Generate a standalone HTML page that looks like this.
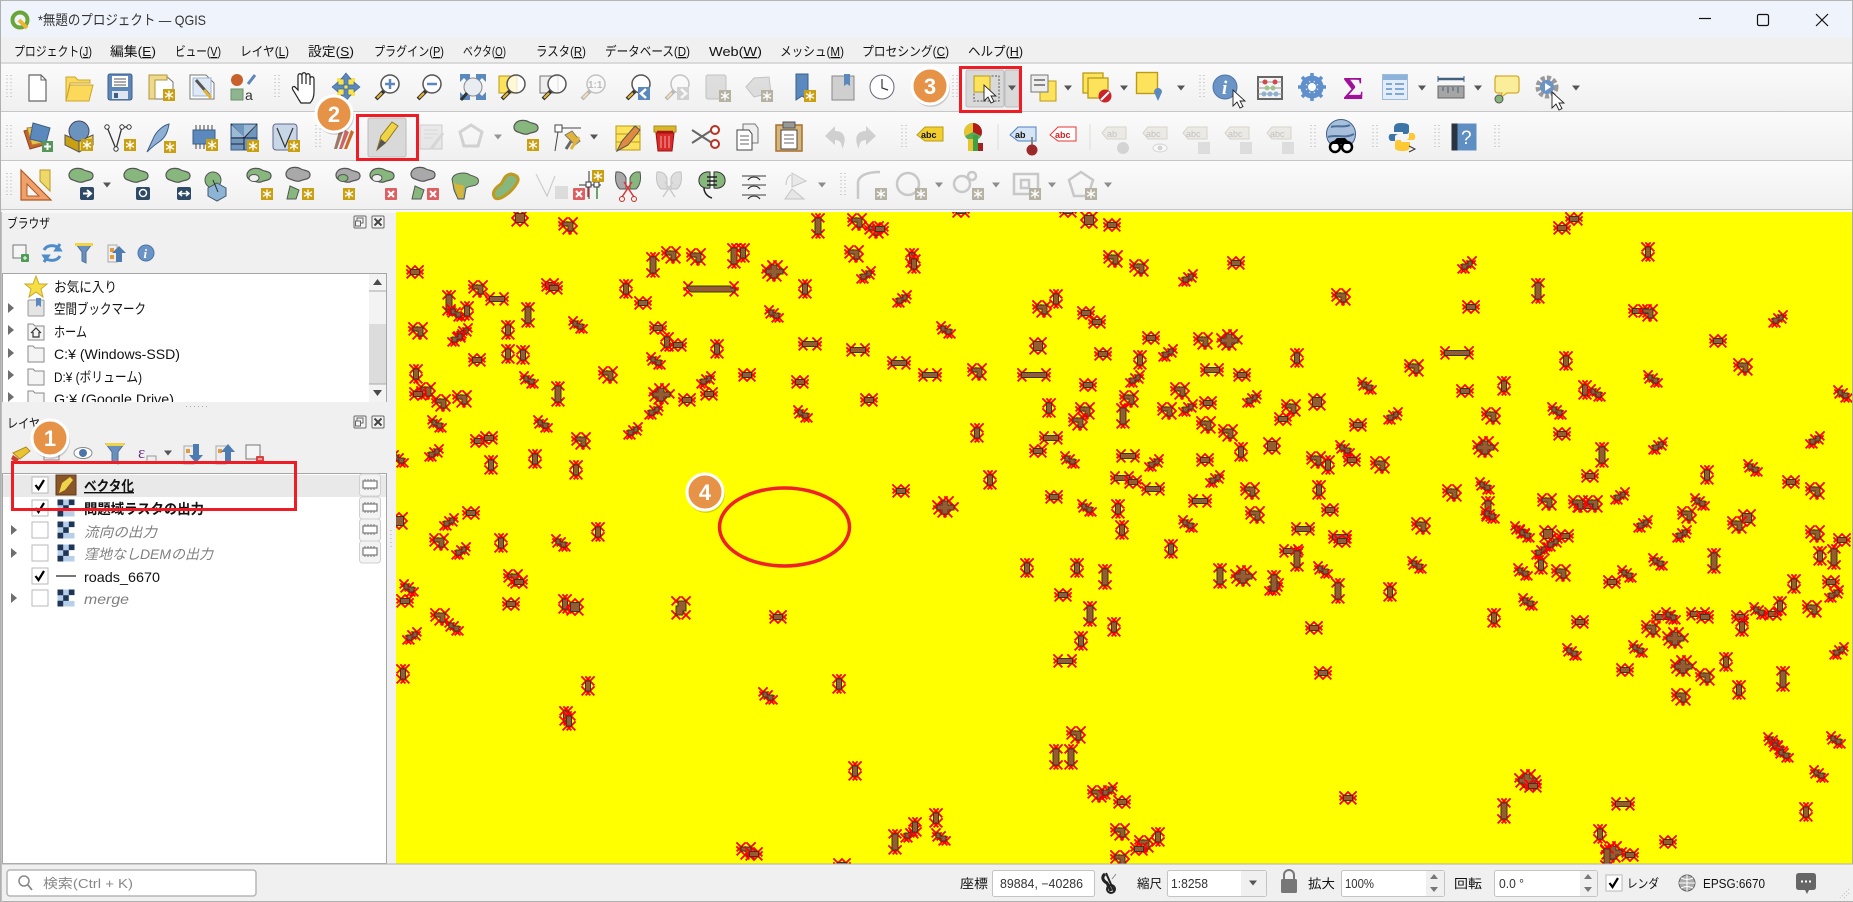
<!DOCTYPE html>
<html lang="ja"><head><meta charset="utf-8"><title>*無題のプロジェクト — QGIS</title>
<style>
html,body{margin:0;padding:0;width:1853px;height:902px;overflow:hidden;background:#f0f0f0}
svg{display:block}
text{font-family:"Liberation Sans","Noto Sans CJK JP",sans-serif;fill:#111}
.m text{font-size:13px}
.g{opacity:.32}
.red{stroke:#f00;stroke-width:1.5;fill:none;shape-rendering:crispEdges}
.br{fill:#945c30;stroke:#3a342e;stroke-width:1}
</style></head><body>
<svg width="1853" height="902" viewBox="0 0 1853 902" xmlns="http://www.w3.org/2000/svg">
<defs>
<linearGradient id="tb" x1="0" y1="0" x2="0" y2="1"><stop offset="0" stop-color="#fbfbfb"/><stop offset="1" stop-color="#f0f0f0"/></linearGradient>
<!-- map markers -->
<path id="x" class="red" d="M-4.500-4.500L4.500 4.500M4.500-4.500L-4.500 4.500"/>
<g id="h"><use href="#x" x="-4" y="-2"/><use href="#x" x="4" y="-2"/><use href="#x" x="-4" y="2"/><use href="#x" x="4" y="2"/><rect class="br" x="-4.500" y="-2.500" width="9" height="5"/></g>
<g id="w"><use href="#x" x="-7" y="-2"/><use href="#x" x="7" y="-2"/><use href="#x" x="-7" y="2"/><use href="#x" x="7" y="2"/><rect class="br" x="-7.500" y="-2.500" width="15" height="5"/></g>
<g id="W"><use href="#x" x="-12" y="-2"/><use href="#x" x="12" y="-2"/><use href="#x" x="-12" y="2"/><use href="#x" x="12" y="2"/><rect class="br" x="-12.500" y="-2.500" width="25" height="5"/></g>
<g id="L"><use href="#x" x="-23" y="-3"/><use href="#x" x="23" y="-3"/><use href="#x" x="-23" y="3"/><use href="#x" x="23" y="3"/><path class="br" d="M-24-3H20V-1H24V3H-20L-24-1Z"/></g>
<g id="v"><use href="#x" x="-2" y="-5"/><use href="#x" x="2" y="-5"/><use href="#x" x="-2" y="5"/><use href="#x" x="2" y="5"/><rect class="br" x="-2.500" y="-5" width="5" height="10"/></g>
<g id="t"><use href="#x" x="-2" y="-8"/><use href="#x" x="2" y="-8"/><use href="#x" x="-2" y="8"/><use href="#x" x="2" y="8"/><rect class="br" x="-3" y="-8" width="6" height="16"/></g>
<g id="s"><use href="#x" x="-4" y="-4"/><use href="#x" x="4" y="-4"/><use href="#x" x="-4" y="4"/><use href="#x" x="4" y="4"/><rect class="br" x="-4.500" y="-4.500" width="9" height="9"/></g>
<g id="S"><use href="#x" x="-5" y="-7"/><use href="#x" x="5" y="-7"/><use href="#x" x="-5" y="7"/><use href="#x" x="5" y="7"/><path class="br" d="M-3-7H5V3L2 3V7H-5V-2H-3Z"/></g>
<g id="l"><use href="#x" x="-5" y="-4"/><use href="#x" x="5" y="-4"/><use href="#x" x="5" y="4"/><use href="#x" x="-1" y="4"/><use href="#x" x="-5" y="0"/><path class="br" d="M-5-4H5V5H0V0H-5Z"/></g>
<g id="z"><use href="#x" x="-5" y="-4"/><use href="#x" x="0" y="-1"/><use href="#x" x="5" y="4"/><use href="#x" x="-4" y="0"/><use href="#x" x="2" y="4"/><path class="br" d="M-5-4H-1V-1H5V4H0V1H-5Z"/></g>
<g id="n"><use href="#x" x="5" y="-4"/><use href="#x" x="0" y="-1"/><use href="#x" x="-5" y="4"/><use href="#x" x="4" y="0"/><use href="#x" x="-2" y="4"/><path class="br" d="M5-4H1V-1H-5V4H0V1H5Z"/></g>
<g id="b"><use href="#x" x="-8" y="-2"/><use href="#x" x="-2" y="-6"/><use href="#x" x="4" y="-6"/><use href="#x" x="9" y="0"/><use href="#x" x="3" y="6"/><use href="#x" x="-3" y="6"/><use href="#x" x="-7" y="3"/><path class="br" d="M-8-2H-3V-6H3V-2H9V3H3V7H-3V3H-8Z"/></g>
<!-- icon parts -->
<g id="star"><rect x="-6" y="-6" width="12" height="12" fill="#c9a012"/><path d="M0-4.500V4.500M-4-2.300L4 2.300M4-2.300L-4 2.300" stroke="#fff" stroke-width="1.300"/></g>
<g id="gstar"><rect x="-6" y="-6" width="12" height="12" fill="#b5b1a3"/><path d="M0-4.500V4.500M-4-2.300L4 2.300M4-2.300L-4 2.300" stroke="#fff" stroke-width="1.300"/></g>
<g id="rx"><rect x="-6" y="-6" width="12" height="12" rx="1" fill="#dd5f62"/><path d="M-3-3L3 3M3-3L-3 3" stroke="#fff" stroke-width="2"/></g>
<path id="gp" d="M-11-7C-8-12 0-11 3-9C7-7 12-8 12-3C12 2 5 1 2 3C-2 4-5 2-8 1C-12 0-13-4-11-7Z" fill="#87b77d" stroke="#555" stroke-width="1.200"/>
<path id="gpg" d="M-11-7C-8-12 0-11 3-9C7-7 12-8 12-3C12 2 5 1 2 3C-2 4-5 2-8 1C-12 0-13-4-11-7Z" fill="#a9a9a9" stroke="#555" stroke-width="1.200"/>
<g id="mg"><path d="M-3 4L-11 12" stroke="#333" stroke-width="4"/><path d="M-5 6L-10 11" stroke="#e8b52c" stroke-width="2"/><circle cx="3" cy="-3" r="9" fill="#fff" fill-opacity=".75" stroke="#555" stroke-width="1.500"/></g>
<path id="dr" d="M-4-2.500H4L0 2.500Z" fill="#555"/>
<g id="grip" fill="#b0b0b0"><path d="M-2-12v24M2-12v24" stroke="#aaa" stroke-width="1" stroke-dasharray="1 2.500" fill="none"/></g>
<g id="sel"><rect x="-10" y="-10" width="20" height="20" fill="#fde25c" stroke="#b99b17" stroke-width="1.300"/></g>
<path id="cur" d="M0 0V16L4 12L7 18L10 16.500L7 11H12Z" fill="#fff" stroke="#222" stroke-width=".9"/>
<g id="tag"><path d="M-12-1L-7-7H12V5H-7Z" fill="#e3e0d6" stroke="#bbb8aa"/></g>
<g id="chk"><rect x="-8" y="-8" width="16" height="16" fill="#fff" stroke="#b9b9b9"/></g>
<path id="tick" d="M-4.500 0L-1.500 4L4-5" fill="none" stroke="#000" stroke-width="2.200"/>
<g id="tri"><path d="M-3-5L3 0L-3 5Z" fill="#6e6e6e"/></g>
<path id="fold" d="M-8-8H-3L-1-6H8V8H-8Z" fill="#f4f4f4" stroke="#8a8a8a"/>
<g id="chip"><rect x="-10.500" y="-11" width="21" height="22" rx="3" fill="#f3f3f3" stroke="#d0d0d0"/><rect x="-7" y="-4" width="14" height="7" fill="#fff" stroke="#777" stroke-width="1.200"/><path d="M-5-6v2M-2-6v2M1-6v2M4-6v2M-5 3v2M-2 3v2M1 3v2M4 3v2" stroke="#777"/></g>
<g id="rast"><rect x="-8.500" y="-8.500" width="17" height="17" fill="#b7cfe8"/><path d="M-8.500-8.500h5.700v5.700h-5.700zM2.800-8.500h5.700v5.700h-5.700zM-2.800-2.800h5.700v5.700h-5.700zM-8.500 2.800h5.700v5.700h-5.700z" fill="#1d3556"/><path d="M2.800-2.800h5.700v5.700h-5.700z" fill="#fff"/></g>
<g id="spin"><path d="M-4-4L0-9L4-4ZM-4 4L0 9L4 4Z" fill="#777"/></g>
<g id="fl"><rect x="-6" y="-6" width="12" height="12" rx="1" fill="#f4f4f4" stroke="#666"/><rect x="-3" y="-4" width="6" height="5" fill="none" stroke="#666"/><rect x="-4.500" y="-1" width="5" height="5" fill="#f4f4f4" stroke="#666"/></g>
<g id="cl"><rect x="-6" y="-6" width="12" height="12" rx="1" fill="#f4f4f4" stroke="#666"/><path d="M-3.500-3.500L3.500 3.500M3.500-3.500L-3.500 3.500" stroke="#444" stroke-width="2"/></g>
<g id="bd"><circle cx="1" cy="2" r="19" fill="#000" fill-opacity=".16"/><circle r="18" fill="#e69247" stroke="#fff" stroke-width="3"/></g>
</defs>

<!-- base -->
<rect width="1853" height="902" fill="#f0f0f0"/>
<rect width="1853" height="37" fill="#eff3fb"/>
<rect y="0" width="1853" height="1" fill="#b5b5b5"/>
<rect y="62" width="1853" height="2" fill="#dadada"/>
<rect y="64" width="1853" height="47" fill="url(#tb)"/><rect y="111" width="1853" height="1" fill="#c6c6c6"/>
<rect y="112" width="1853" height="48" fill="url(#tb)"/><rect y="160" width="1853" height="1" fill="#c6c6c6"/>
<rect y="161" width="1853" height="48" fill="url(#tb)"/><rect y="209" width="1853" height="1" fill="#c6c6c6"/>
<rect y="210" width="1853" height="3" fill="#f8f8f8"/>

<!-- title -->
<circle cx="20" cy="20" r="7.500" fill="none" stroke="#6aa53a" stroke-width="4"/><path d="M19 20L27 28" stroke="#eeb72c" stroke-width="4"/>
<text x="38" y="25" font-size="14" textLength="168" lengthAdjust="spacingAndGlyphs" style="fill:#333">*無題のプロジェクト — QGIS</text>
<path d="M1699 18.500H1711" stroke="#111" stroke-width="1.200"/><rect x="1757.500" y="14.500" width="11" height="11" rx="1.500" fill="none" stroke="#111" stroke-width="1.200"/><path d="M1816 14L1828 26M1828 14L1816 26" stroke="#111" stroke-width="1.200"/>

<!-- menu -->
<g class="m">
<text x="14" y="56" textLength="78" lengthAdjust="spacingAndGlyphs">プロジェクト(<tspan text-decoration="underline">J</tspan>)</text>
<text x="110" y="56" textLength="46" lengthAdjust="spacingAndGlyphs">編集(<tspan text-decoration="underline">E</tspan>)</text>
<text x="175" y="56" textLength="46" lengthAdjust="spacingAndGlyphs">ビュー(<tspan text-decoration="underline">V</tspan>)</text>
<text x="240" y="56" textLength="49" lengthAdjust="spacingAndGlyphs">レイヤ(<tspan text-decoration="underline">L</tspan>)</text>
<text x="308" y="56" textLength="46" lengthAdjust="spacingAndGlyphs">設定(<tspan text-decoration="underline">S</tspan>)</text>
<text x="374" y="56" textLength="70" lengthAdjust="spacingAndGlyphs">プラグイン(<tspan text-decoration="underline">P</tspan>)</text>
<text x="463" y="56" textLength="43" lengthAdjust="spacingAndGlyphs">ベクタ(<tspan text-decoration="underline">O</tspan>)</text>
<text x="536" y="56" textLength="50" lengthAdjust="spacingAndGlyphs">ラスタ(<tspan text-decoration="underline">R</tspan>)</text>
<text x="605" y="56" textLength="85" lengthAdjust="spacingAndGlyphs">データベース(<tspan text-decoration="underline">D</tspan>)</text>
<text x="709" y="56" textLength="53" lengthAdjust="spacingAndGlyphs">Web(<tspan text-decoration="underline">W</tspan>)</text>
<text x="780" y="56" textLength="64" lengthAdjust="spacingAndGlyphs">メッシュ(<tspan text-decoration="underline">M</tspan>)</text>
<text x="862" y="56" textLength="87" lengthAdjust="spacingAndGlyphs">プロセシング(<tspan text-decoration="underline">C</tspan>)</text>
<text x="968" y="56" textLength="55" lengthAdjust="spacingAndGlyphs">ヘルプ(<tspan text-decoration="underline">H</tspan>)</text>
</g>

<!-- grips -->
<g><use href="#grip" x="9" y="87"/><use href="#grip" x="277" y="87"/><use href="#grip" x="955" y="87"/><use href="#grip" x="1202" y="87"/>
<use href="#grip" x="9" y="137"/><use href="#grip" x="318" y="137"/><use href="#grip" x="904" y="137"/><use href="#grip" x="1313" y="137"/><use href="#grip" x="1375" y="137"/><use href="#grip" x="1437" y="137"/><use href="#grip" x="1497" y="137"/>
<use href="#grip" x="9" y="185"/><use href="#grip" x="843" y="185"/></g>

<!-- ROW 1 -->
<path d="M29 75H41L46 80V101H29Z" fill="#fff" stroke="#666" stroke-width="1.200"/><path d="M41 75V80H46" fill="none" stroke="#666"/>
<path d="M66 82V77H75L78 80H90V83H70L66 101ZM66 101L70 85H93L89 101Z" fill="#fdd95b" stroke="#c9a52d"/>
<g transform="translate(120 87)"><rect x="-12" y="-13" width="24" height="26" rx="2" fill="#5d87b8" stroke="#3e5f85"/><rect x="-8" y="-11" width="16" height="11" fill="#fff"/><path d="M-6-8H6M-6-5H6M-6-2H6" stroke="#555"/><rect x="-8" y="4" width="16" height="8" fill="#dfe6ef"/><rect x="-6" y="6" width="4" height="5" fill="#3e5f85"/></g>
<g transform="translate(161 87)"><path d="M-12-12H4L12-5V12H-12Z" fill="#fff" stroke="#777"/><path d="M-12-12H6V-7H-6V12H-12Z" fill="#efd98a" stroke="#b09540"/><use href="#star" x="8" y="8"/></g>
<g transform="translate(202 87)"><path d="M-12-12H4L12-4V12H-12Z" fill="#fff" stroke="#777"/><rect x="-9" y="-9" width="18" height="18" fill="#dfe8f5" stroke="#9cb2cf"/><path d="M-6-7L7 8" stroke="#555" stroke-width="3"/><path d="M2 3L9 11" stroke="#e0b339" stroke-width="3"/></g>
<g transform="translate(243 87)"><circle cx="-6" cy="-7" r="6" fill="#c8602c"/><path d="M5-3L12-12" stroke="#5d87b8" stroke-width="3"/><rect x="-12" y="2" width="12" height="11" fill="#8fb58f" stroke="#6b8f6b"/><text x="2" y="13" font-size="14" style="fill:#333">a</text></g>
<path d="M299 100L293 90C291 87 294 85 296 88L298 90V76C298 73 302 73 302 76V84V75C302 72 306 72 306 75V84V76C306 73 310 73 310 76V85V79C310 76 314 76 314 79V92C314 97 312 101 310 103H301Z" fill="#fff" stroke="#222" stroke-width="1.200"/>
<g transform="translate(346 87)"><rect x="-9" y="-9" width="18" height="18" fill="#fbe34d"/><path d="M0-14L-5-8H-2V8H-5L0 14L5 8H2V-8H5ZM-14 0L-8-5V-2H8V-5L14 0L8 5V2H-8V5Z" fill="#5b89bd" stroke="#3e6a9c" stroke-width=".7"/></g>
<g transform="translate(387 87)"><use href="#mg"/><path d="M3-8V2M-2-3H8" stroke="#5b89bd" stroke-width="2.500"/></g>
<g transform="translate(429 87)"><use href="#mg"/><path d="M-2-3H8" stroke="#5b89bd" stroke-width="2.500"/></g>
<g transform="translate(473 87)"><circle r="9" fill="#e9edf2" stroke="#888"/><path d="M-13-13H-3V-9L-6-6L-9-9L-13-5ZM13-13H3V-9L6-6L9-9L13-5ZM-13 13H-3V9L-6 6L-9 9L-13 5ZM13 13H3V9L6 6L9 9L13 5Z" fill="#5b89bd"/><path d="M-6 6L-12 13" stroke="#333" stroke-width="3"/></g>
<g transform="translate(511 87)"><rect x="-12" y="-11" width="18" height="17" fill="#fde25c" stroke="#b99b17"/><use href="#mg" x="2"/></g>
<g transform="translate(552 87)"><rect x="-12" y="-11" width="18" height="17" fill="#eee" stroke="#777"/><use href="#mg" x="2"/></g>
<g class="g" transform="translate(593 87)"><use href="#mg"/><text x="-5" y="1" font-size="10" font-weight="bold" style="fill:#444">1:1</text></g>
<g transform="translate(638 87)"><use href="#mg"/><rect x="0" y="0" width="12" height="13" fill="#5b89bd"/><path d="M8 2L3 6.500L8 11" fill="none" stroke="#fff" stroke-width="2.500"/></g>
<g class="g" transform="translate(677 87)"><use href="#mg"/><rect x="0" y="0" width="12" height="13" fill="#888"/><path d="M4 2L9 6.500L4 11" fill="none" stroke="#fff" stroke-width="2.500"/></g>
<g class="g" transform="translate(717 87)"><rect x="-11" y="-12" width="20" height="24" rx="2" fill="#aaa" stroke="#555"/></g>
<use href="#gstar" x="725" y="96"/>
<g class="g" transform="translate(759 87)"><path d="M-13 0L-5-9L10-10L12 6L-5 10Z" fill="#aaa" stroke="#555"/></g>
<use href="#gstar" x="767" y="96"/>
<path d="M796 74H808V100L802 96L796 100Z" fill="#5b89bd" stroke="#3e5f85"/><use href="#star" x="810" y="96" />
<path d="M832 76H854V100H832Z" fill="#cfcfcf" stroke="#888"/><path d="M844 74H850V86L847 84L844 86Z" fill="#5b89bd"/>
<circle cx="882" cy="87" r="12" fill="#fff" stroke="#667"/><path d="M882 79V88L888 90" fill="none" stroke="#333" stroke-width="1.200"/>
<!-- select -->
<rect x="966" y="70" width="38" height="37" rx="2" fill="#d9d9d9" stroke="#bbb"/><rect x="1005" y="70" width="14" height="37" rx="2" fill="#d9d9d9" stroke="#bbb"/>
<rect x="974" y="76" width="25" height="25" fill="none" stroke="#555" stroke-dasharray="2 1.500"/><rect x="974" y="76" width="16" height="16" fill="#fde25c" stroke="#b99b17"/><use href="#cur" x="984" y="85"/><use href="#dr" x="1012" y="88"/>
<g transform="translate(1042 87)"><rect x="-2" y="-6" width="16" height="20" fill="#fde25c" stroke="#b99b17"/><rect x="-11" y="-12" width="17" height="17" fill="#eee" stroke="#777"/><path d="M-8-7H3M-8-2H3" stroke="#888" stroke-width="2"/></g><use href="#dr" x="1068" y="88"/>
<g transform="translate(1096 87)"><use href="#sel" x="-3" y="-4"/><use href="#sel" x="2" y="1"/><circle cx="9" cy="9" r="6.500" fill="#c9232b"/><path d="M5 13L13 5" stroke="#fff" stroke-width="2"/></g><use href="#dr" x="1124" y="88"/>
<g transform="translate(1150 87)"><use href="#sel" transform="translate(-3 -4) scale(1.050)"/><path d="M8 14L4 5A4 4 0 1 1 12 5Z" fill="#5b89bd"/></g><use href="#dr" x="1181" y="88"/>
<g transform="translate(1225 87)"><circle r="12" fill="#6a93c6" stroke="#4d75a8"/><text x="-3" y="7" font-size="19" font-weight="bold" font-style="italic" style="fill:#fff;font-family:'Liberation Serif',serif">i</text></g><use href="#cur" x="1233" y="90"/>
<g transform="translate(1270 87)"><rect x="-12" y="-10" width="24" height="22" fill="none" stroke="#666" stroke-width="2"/><path d="M-12-5H12M-12 1H12M-12 7H12" stroke="#999"/><circle cx="-5" cy="-5" r="2.500" fill="#d3474a"/><circle cx="5" cy="-5" r="2.500" fill="#d3474a"/><circle cx="-3" cy="1" r="2.500" fill="#9fc48f"/><circle cx="3" cy="1" r="2.500" fill="#9fc48f"/><circle cx="-6" cy="7" r="2.500" fill="#8eb0d2"/><circle cx="0" cy="7" r="2.500" fill="#8eb0d2"/><circle cx="6" cy="7" r="2.500" fill="#8eb0d2"/></g>
<g transform="translate(1312 87)"><circle r="9" fill="none" stroke="#6090cc" stroke-width="5"/><path d="M0-14V14M-14 0H14M-10-10L10 10M10-10L-10 10" stroke="#6090cc" stroke-width="3.500"/><circle r="4" fill="#fff"/></g>
<text x="1343" y="99" font-size="32" font-weight="bold" style="fill:#a0109a;font-family:'Liberation Serif',serif">Σ</text>
<g transform="translate(1395 87)"><rect x="-12.500" y="-12.500" width="25" height="25" fill="#e4edf7" stroke="#9dbbdc"/><rect x="-12" y="-12" width="24" height="5" fill="#8db3da"/><path d="M-9-3H-3M0-3H9M-9 2H-3M0 2H9M-9 7H-3M0 7H9" stroke="#7fa9d5" stroke-width="2"/></g><use href="#dr" x="1422" y="88"/>
<g transform="translate(1451 87)"><rect x="-13" y="-1" width="26" height="12" fill="#a5a5a5" stroke="#666"/><path d="M-13-8H13" stroke="#44607f" stroke-width="2.500"/><path d="M-13-11V-5M13-11V-5M-8 0v4M-3 0v6M2 0v4M7 0v6" stroke="#44607f"/></g><use href="#dr" x="1478" y="88"/>
<g transform="translate(1507 87)"><path d="M-12-11H9Q12-11 12-8V3Q12 6 9 6H0L-7 11L-5 6H-9Q-12 6-12 3V-8Q-12-11-9-11Z" fill="#fbee9a" stroke="#d4ad2e" stroke-width="1.300"/><circle cx="-8" cy="12" r="4" fill="#86b47c" stroke="#555"/></g>
<g transform="translate(1547 87)"><circle r="9" fill="none" stroke="#999" stroke-width="5" stroke-dasharray="4 2"/><circle r="7" fill="#6a93c6"/><path d="M-2-4L4 0L-2 4Z" fill="#fff"/></g><use href="#cur" x="1552" y="92" /><use href="#dr" x="1576" y="88"/>

<!-- ROW 2 -->
<g transform="translate(38 137)"><path d="M-14-6L0-10L6 8L-8 12Z" fill="#c9602c" stroke="#8d4720"/><path d="M-11-9L3-11L8 5L-6 8Z" fill="#e9c24a" stroke="#a98a2b"/><path d="M-5-14L12-9L8 6L-8 2Z" fill="#5b89bd" stroke="#3e5f85"/><rect x="4" y="4" width="11" height="11" fill="#57965a"/><path d="M9.500 6V13M6 9.500H13" stroke="#fff" stroke-width="2"/></g>
<g transform="translate(79 137)"><path d="M-14-2L0 4V15L-14 8Z" fill="#c9a012" stroke="#555"/><path d="M14-2L0 4V15L14 8Z" fill="#f0d040" stroke="#555"/><circle cy="-6" r="10" fill="#6c93bd" stroke="#446"/><use href="#star" x="8" y="8"/></g>
<g transform="translate(119 137)"><path d="M-12-10L-3 12L3-10L10-10" fill="none" stroke="#333" stroke-width="1.300"/><circle cx="-12" cy="-10" r="2.200" fill="#fff" stroke="#333"/><circle cx="3" cy="-10" r="2.200" fill="#fff" stroke="#333"/><circle cx="10" cy="-10" r="2.200" fill="#fff" stroke="#333"/><circle cx="-3" cy="12" r="2.200" fill="#fff" stroke="#333"/><use href="#star" x="11" y="8"/></g>
<g transform="translate(160 137)"><path d="M-13 15L-7 2C-4-6 4-12 9-13C8-6 6 0-1 5C-4 7-7 9-13 15Z" fill="#8fb0d5" stroke="#3e5f85"/><use href="#star" x="10" y="10"/></g>
<g transform="translate(204 137)"><rect x="-11" y="-7" width="22" height="14" fill="#5b89bd" stroke="#3e5f85"/><path d="M-8-12V-7M-4-12V-7M0-12V-7M4-12V-7M8-12V-7M-8 7V12M-4 7V12M0 7V12" stroke="#444"/><use href="#star" x="8" y="8"/></g>
<g transform="translate(244 137)"><rect x="-13" y="-13" width="26" height="26" fill="#6f96bd" stroke="#3e5f85"/><path d="M-13-13L0 1L13-13M-13 1H13M0 1V13M-13 7H0" stroke="#223" fill="none"/><path d="M-12-12L0 0H-12ZM0-12H12L0 0Z" fill="#9dbad4"/><use href="#star" x="9" y="9"/></g>
<g transform="translate(285 137)"><rect x="-12" y="-13" width="24" height="26" rx="3" fill="#c8d7e7" stroke="#668"/><path d="M-8-9L0 10L8-9" fill="none" stroke="#333" stroke-width="1.200"/><use href="#star" x="9" y="9"/></g>
<g transform="translate(342 137)"><path d="M-8 12L-3-6L1-5L-5 12Z" fill="#9a7a66"/><path d="M-3 12L3-7L7-5L0 12Z" fill="#c66"/><path d="M2 12L9-7L12-5L5 12Z" fill="#ca6a2a"/></g>
<rect x="368" y="118" width="38" height="39" rx="2" fill="#d9d9d9" stroke="#bbb"/>
<path d="M377 150L381 136L392 122L398 126L387 141Z" fill="#f0d448" stroke="#94791c"/><path d="M377 150L381 139L386 143Z" fill="#555"/>
<g class="g"><g transform="translate(431 137)"><rect x="-11" y="-12" width="22" height="24" fill="#ccc" stroke="#777"/><path d="M-7-7H7M-7-3H7M-7 1H2" stroke="#999"/><path d="M0 12L12-4" stroke="#999" stroke-width="3"/></g><path d="M471 125L482 132L478 146H464L460 132Z" fill="none" stroke="#888" stroke-width="3"/></g>
<g opacity=".6"><use href="#dr" x="498" y="137"/></g>
<use href="#gp" x="526" y="131"/><use href="#star" x="533" y="145"/>
<g transform="translate(568 137)"><rect x="-13" y="-12" width="7" height="7" fill="#fff" stroke="#444"/><path d="M-10-5L-13 14M-6-9H13" stroke="#444"/><path d="M-2 12L7-2" stroke="#666" stroke-width="3"/><path d="M-3-2L4-6L12 4L7 8Z" fill="#e0b339" stroke="#777"/><path d="M3 12L11 0" stroke="#e0b339" stroke-width="3"/></g><use href="#dr" x="594" y="137"/>
<g transform="translate(628 137)"><rect x="-12" y="-11" width="24" height="24" fill="#fde25c" stroke="#b99b17"/><path d="M-12-3H12M-12 5H12" stroke="#b99b17"/><path d="M-11 14L-6 4L7-11L12-7L0 8Z" fill="#e08a40" stroke="#555"/></g>
<g transform="translate(665 137)"><rect x="-11" y="-11" width="22" height="6" fill="#d8b828" stroke="#a98a20"/><path d="M-9-4H9L7 14H-7Z" fill="#d92a2a" stroke="#911"/><path d="M-4-1V11M0-1V11M4-1V11" stroke="#eaa"/><path d="M-8-5H8" stroke="#a11" stroke-width="2.500"/></g>
<g transform="translate(705 137)"><path d="M-13-7L7 6M-13 6L7-7" stroke="#666" stroke-width="2"/><circle cx="10" cy="-7" r="4" fill="#fff" stroke="#b32"  stroke-width="2"/><circle cx="10" cy="7" r="4" fill="#fff" stroke="#b32" stroke-width="2"/></g>
<g transform="translate(747 137)"><path d="M-4-13H8L11-9V6H-4Z" fill="#eee" stroke="#777"/><path d="M-10-7H2L5-3V13H-10Z" fill="#fff" stroke="#444"/><path d="M-7-1H2M-7 3H2M-7 7H2" stroke="#666"/></g>
<g transform="translate(789 137)"><rect x="-13" y="-12" width="26" height="26" fill="#d8b57a" stroke="#a6702c" stroke-width="1.500"/><rect x="-6" y="-15" width="12" height="6" fill="#999" stroke="#555"/><path d="M-8-7H8V12H-8Z" fill="#fff" stroke="#444"/><path d="M-5-2H5M-5 2H5M-5 6H5" stroke="#666"/></g>
<g opacity=".4" fill="#999"><path d="M825 137L835 127V132C847 132 846 143 842 150C842 144 840 141 835 141V146Z" transform="translate(0 -1)"/><path d="M876 137L866 127V132C854 132 855 143 859 150C859 144 861 141 866 141V146Z" transform="translate(0 -1)"/></g>
<g style="font-size:10px"><path d="M917 135L925 127H943V141H925Z" fill="#f3cf2e" stroke="#b99b17"/><text x="921" y="138" font-size="9" font-weight="bold">abc</text>
<g transform="translate(973 137)"><circle cy="-5" r="9" fill="#5aaa55"/><path d="M0-14A9 9 0 0 1 8-1L0-5Z" fill="#b31a1a"/><path d="M0-14A9 9 0 0 0-8-1L0-5Z" fill="#e8c530"/><rect x="-5" y="2" width="5" height="12" fill="#e8c530"/><rect x="0" y="-2" width="5" height="16" fill="#3fa044"/><rect x="5" y="6" width="5" height="8" fill="#a52020"/></g>
<path d="M998 124V150" stroke="#ddd"/>
<path d="M1010 135L1018 127H1036V141H1018Z" fill="#d5e4f5" stroke="#4d80c4"/><text x="1015" y="138" font-size="9" font-weight="bold">ab</text><path d="M1032 137V148" stroke="#888" stroke-width="2"/><circle cx="1032" cy="150" r="5.500" fill="#9c2a2a"/>
<path d="M1050 135L1058 127H1076V141H1058Z" fill="#fff" stroke="#e33"/><text x="1055" y="138" font-size="9" font-weight="bold" style="fill:#c22">abc</text>
<path d="M1090 124V150" stroke="#ddd"/></g>
<g opacity=".55"><g font-size="9"><use href="#tag" x="1114" y="134"/><text x="1107" y="137" style="fill:#999" font-size="9">ab</text><circle cx="1123" cy="148" r="6" fill="#bbb"/><use href="#tag" x="1155" y="134"/><text x="1146" y="137" style="fill:#999" font-size="9">abc</text><ellipse cx="1160" cy="148" rx="7" ry="4" fill="#fff" stroke="#bbb"/><circle cx="1160" cy="148" r="2.500" fill="#bbb"/><use href="#tag" x="1195" y="134"/><text x="1186" y="137" style="fill:#999" font-size="9">abc</text><rect x="1198" y="142" width="12" height="12" fill="#ccc"/><use href="#tag" x="1237" y="134"/><text x="1228" y="137" style="fill:#999" font-size="9">abc</text><rect x="1240" y="142" width="12" height="12" fill="#ccc"/><use href="#tag" x="1279" y="134"/><text x="1270" y="137" style="fill:#999" font-size="9">abc</text><rect x="1282" y="142" width="12" height="12" fill="#ccc"/></g></g>
<g transform="translate(1341 137)"><circle cy="-3" r="14.500" fill="#a7bfdb" stroke="#3e5f85"/><path d="M-10-10C-3-12 4-9 9-12M-13 0C-5-3 4 2 13-3" stroke="#4b6f99" fill="none" stroke-width="2"/><circle cx="-6" cy="10" r="5" fill="#fff" stroke="#000" stroke-width="2.500"/><circle cx="6" cy="10" r="5" fill="#fff" stroke="#000" stroke-width="2.500"/><path d="M-10 7L-4 1H4L10 7" fill="#000"/></g>
<g transform="translate(1402 137)"><path d="M-1-14C-8-14-8-11-8-8V-5H1V-3H-11C-14-3-14 3-11 4H-7V0C-7-2-5-3-3-3H4C6-3 7-4 7-6V-11C7-13 4-14-1-14Z" fill="#3c74a8"/><path d="M1 14C8 14 8 11 8 8V5H-1V3H11C14 3 14-3 11-4H7V0C7 2 5 3 3 3H-4C-6 3-7 4-7 6V11C-7 13-4 14 1 14Z" fill="#fcc934"/><path d="M7 9L13 12L7 15" fill="none" stroke="#333"/></g>
<g transform="translate(1464 137)"><rect x="-12.500" y="-13.500" width="25" height="27" fill="#5f8ec2"/><rect x="-12.500" y="-13.500" width="6" height="27" fill="#2a3440"/><text x="-3" y="7" font-size="19" style="fill:#fff">?</text></g>

<!-- ROW 3 -->
<g transform="translate(36 185)"><path d="M-15-15L15 15H-15Z" fill="#f0a06a" stroke="#b05a22" stroke-width="1.200"/><path d="M-9-1L3 11H-9Z" fill="#f8f8f8" stroke="#b05a22"/><path d="M4-15H14V6L4-4Z" fill="#efd86a" stroke="#b79a24"/></g>
<g><use href="#gp" x="81" y="179"/><rect x="80" y="187" width="14" height="13" rx="2" fill="#2e4a66"/><path d="M83 193.500H90M87 190L91 193.500L87 197" fill="none" stroke="#fff" stroke-width="2"/><use href="#dr" x="107" y="185"/>
<use href="#gp" x="136" y="179"/><rect x="136" y="187" width="14" height="13" rx="2" fill="#2e4a66"/><circle cx="143" cy="193" r="3.500" fill="none" stroke="#fff" stroke-width="1.500"/>
<use href="#gp" x="178" y="179"/><rect x="177" y="187" width="14" height="13" rx="2" fill="#2e4a66"/><path d="M179 193.500H189M182 191L179 193.500L182 196M186 191L189 193.500L186 196" fill="none" stroke="#fff" stroke-width="1.500"/>
<circle cx="213" cy="180" r="8" fill="#87b77d" stroke="#555"/><path d="M217 183L226 188V196L217 201L208 196V188Z" fill="#8db3d5" stroke="#456"/><path d="M213 180L218 192" stroke="#333"/>
<use href="#gp" x="259" y="179"/><ellipse cx="254" cy="178" rx="5" ry="3.500" fill="#f0f0f0" stroke="#555"/><use href="#star" x="267" y="194"/>
<use href="#gpg" x="298" y="178"/><path d="M290 186L299 190L296 199H287Z" fill="#87b77d" stroke="#555"/><use href="#star" x="308" y="194"/>
<use href="#gpg" x="348" y="179"/><ellipse cx="343" cy="178" rx="5" ry="3.500" fill="#87b77d" stroke="#555"/><use href="#star" x="349" y="194"/>
<use href="#gp" x="382" y="179"/><ellipse cx="377" cy="178" rx="5" ry="3.500" fill="#f0f0f0" stroke="#555"/><use href="#rx" x="391" y="194"/>
<use href="#gpg" x="423" y="178"/><path d="M415 186L424 190L421 199H412Z" fill="#87b77d" stroke="#555"/><use href="#rx" x="433" y="194"/>
<path d="M452 179C454 172 466 172 470 175C476 177 480 178 478 183C476 187 470 185 466 188L464 199H458L454 190Z" fill="#87b77d" stroke="#555"/><path d="M453 182C458 186 462 184 464 186L463 198H458Z" fill="#d7b43a"/>
<path d="M495 198C491 193 495 188 501 184C504 180 504 175 511 174C517 175 520 178 517 183C513 190 507 195 501 198C498 199 496 199 495 198Z" fill="#87b77d" stroke="#c09a20" stroke-width="3"/></g>
<g class="g"><path d="M536 174L547 196L555 176" fill="none" stroke="#777" stroke-width="1.200"/><rect x="555" y="186" width="13" height="13" fill="#aaa"/></g>
<g transform="translate(589 185)"><path d="M-10 0H12M0-14V14" stroke="#333"/><path d="M8-14V14" stroke="#3c8a3c" stroke-width="1.500"/><path d="M-1 0V12" stroke="#d33" stroke-width="1.500"/><rect x="-3" y="-3" width="5" height="5" fill="#fff" stroke="#333"/><rect x="5" y="-3" width="5" height="5" fill="#fff" stroke="#333"/><use href="#star" x="9" y="-9" transform="scale(1)"/><use href="#rx" x="-10" y="9"/></g>
<g transform="translate(628 185)"><path d="M-12-13C-6-14-3-10-2-7V4H-8C-13 0-13-8-12-13Z" fill="#a9a9a9" stroke="#555"/><path d="M12-13C6-14 3-10 2-7V4H8C13 0 13-8 12-13Z" fill="#87b77d" stroke="#555"/><path d="M-4-3L6 12M4-3L-6 12" stroke="#d33" stroke-width="1.500"/><circle cx="-6" cy="14" r="2.500" fill="none" stroke="#b32"/><circle cx="6" cy="14" r="2.500" fill="none" stroke="#b32"/></g>
<g class="g" transform="translate(669 185)"><path d="M-12-13C-6-14-3-10-2-7V4H-8C-13 0-13-8-12-13Z" fill="#a9a9a9" stroke="#555"/><path d="M12-13C6-14 3-10 2-7V4H8C13 0 13-8 12-13Z" fill="#a9a9a9" stroke="#555"/><path d="M-4-3L6 12M4-3L-6 12" stroke="#777" stroke-width="1.500"/></g>
<g transform="translate(712 185)"><path d="M-2-13C-8-14-14-10-13-3C-12 2-7 4-2 3ZM2-13C8-14 14-10 13-3C12 2 7 4 2 3Z" fill="#87b77d" stroke="#333"/><path d="M-5-8H5M-5-4H5M-5 0H5" stroke="#222" stroke-width="1.500"/><path d="M-8 3C-8 8-4 12 0 13" fill="none" stroke="#222" stroke-width="1.500"/></g>
<g transform="translate(754 185)" stroke="#999" fill="none" stroke-width="2"><path d="M-12-9H12M-12 0H12M-12 10H12"/><path d="M-6-5C-3-9 3-9 6-5M-6 4C-3 0 3 0 6 4M-6 14C-3 10 3 10 6 14" stroke="#333" stroke-width="1.300"/></g>
<g class="g" transform="translate(796 185)"><path d="M-4-12L10-4L-4 2ZM-4 4L8 14H-11Z" fill="#ccc" stroke="#666"/><path d="M-10 0C-10-5-8-9-5-10" fill="none" stroke="#666"/></g>
<g opacity=".65"><use href="#dr" x="822" y="185"/><use href="#dr" x="939" y="185"/><use href="#dr" x="996" y="185"/><use href="#dr" x="1052" y="185"/><use href="#dr" x="1108" y="185"/></g>
<g fill="none" stroke="#c8c8c8" stroke-width="2.500"><path d="M858 199V182C859 176 866 172 880 172"/><circle cx="908" cy="184" r="11"/><circle cx="962" cy="184" r="8"/><circle cx="972" cy="176" r="4"/><rect x="1014" y="174" width="24" height="20"/><rect x="1021" y="180" width="8" height="8"/><path d="M1081 172L1093 180L1088 196H1074L1069 180Z"/></g>
<use href="#gstar" x="881" y="194"/><use href="#gstar" x="921" y="194"/><use href="#gstar" x="978" y="194"/><use href="#gstar" x="1035" y="194"/><use href="#gstar" x="1091" y="194"/>

<!-- left panel: browser -->
<text x="7" y="228" font-size="13" textLength="43" lengthAdjust="spacingAndGlyphs">ブラウザ</text>
<use href="#fl" x="360" y="222"/><use href="#cl" x="378" y="222"/>
<rect x="13" y="245" width="13" height="13" fill="#f5f5f5" stroke="#777"/><rect x="21" y="254" width="8" height="8" rx="1" fill="#4f9c59"/><path d="M25 256V260M23 258H27" stroke="#fff"/>
<path d="M44 250A9 8 0 0 1 60 250H56L60 244M60 256A9 8 0 0 1 44 256H48L44 262" fill="none" stroke="#4e8cca" stroke-width="3"/>
<path d="M76 244H92L86 252V263L82 261V252Z" fill="#6a8fbc" stroke="#4d6f99"/><rect x="75" y="243" width="18" height="3" fill="#f0d448"/>
<path d="M108 245V262H117V245Z" fill="#eee" stroke="#aaa"/><rect x="110" y="248" width="4" height="4" fill="#e89a3a"/><rect x="110" y="255" width="4" height="4" fill="#e89a3a"/><path d="M119 246L112 253H116V262H122V253H126Z" fill="#4e7cb0"/>
<circle cx="146" cy="253" r="8" fill="#6a93c6" stroke="#4d75a8"/><text x="143.500" y="258" font-size="13" font-weight="bold" font-style="italic" style="fill:#fff;font-family:'Liberation Serif',serif">i</text>

<rect x="2.500" y="273.500" width="384" height="129" fill="#fff" stroke="#a6a6a6"/>
<rect x="369" y="274" width="17" height="128" fill="#f3f3f3"/><rect x="369" y="324" width="17" height="60" fill="#dcdcdc"/><path d="M373 285L377.500 279L382 285Z M373 390L377.500 396L382 390Z" fill="#4a4a4a"/><path d="M369 291H386M369 384H386" stroke="#aaa"/>
<path d="M36 276L39 284H47L41 289L43 297L36 292L29 297L31 289L25 284H33Z" fill="#f6df45" stroke="#c9a82a"/>
<text x="54" y="292" font-size="14" textLength="63" lengthAdjust="spacingAndGlyphs">お気に入り</text>
<use href="#tri" x="11" y="308"/><rect x="28" y="300" width="16" height="16" rx="1" fill="#e4e4e4" stroke="#999"/><path d="M36 298H41V307L38.500 305L36 307Z" fill="#5b89bd"/>
<text x="54" y="314" font-size="14" textLength="92" lengthAdjust="spacingAndGlyphs">空間ブックマーク</text>
<use href="#tri" x="11" y="330"/><use href="#fold" x="36" y="332"/><path d="M31 333L36 328L41 333M33 332V337H39V332" fill="none" stroke="#333" stroke-width="1.200"/>
<text x="54" y="337" font-size="14" textLength="33" lengthAdjust="spacingAndGlyphs">ホーム</text>
<use href="#tri" x="11" y="353"/><use href="#fold" x="36" y="354"/>
<text x="54" y="359" font-size="14" textLength="126" lengthAdjust="spacingAndGlyphs">C:¥ (Windows-SSD)</text>
<use href="#tri" x="11" y="375"/><use href="#fold" x="36" y="377"/>
<text x="54" y="382" font-size="14" textLength="88" lengthAdjust="spacingAndGlyphs">D:¥ (ボリューム)</text>
<use href="#tri" x="11" y="397"/><use href="#fold" x="36" y="399"/>
<text x="54" y="404" font-size="14" textLength="120" lengthAdjust="spacingAndGlyphs">G:¥ (Google Drive)</text>
<rect x="0" y="402" width="389" height="15" fill="#f0f0f0"/>
<path d="M186 406.500H207" stroke="#aaa" stroke-dasharray="1 3"/>

<!-- layers panel -->
<text x="7" y="428" font-size="13" textLength="33" lengthAdjust="spacingAndGlyphs">レイヤ</text>
<use href="#fl" x="360" y="422"/><use href="#cl" x="378" y="422"/>
<path d="M13 453L26 447L30 451L20 459Z" fill="#e8c530" stroke="#b58a2a"/><path d="M13 455L19 459L16 463L11 459Z" fill="#c9402c"/>
<rect x="44" y="448" width="15" height="12" fill="#eee" stroke="#888"/>
<ellipse cx="83" cy="453" rx="9" ry="5.500" fill="#fff" stroke="#888"/><circle cx="83" cy="453" r="4" fill="#4d75a8"/>
<path d="M106 444H124L118 452V464L112 461V452Z" fill="#6a8fbc" stroke="#4d6f99"/><rect x="106" y="443" width="18" height="3" fill="#f0d448"/>
<text x="138" y="458" font-size="17" style="fill:#6a2f8a;font-family:'Liberation Serif',serif">ε</text><rect x="147" y="456" width="9" height="6" fill="#eee" stroke="#999"/><use href="#dr" x="168" y="453"/>
<rect x="184" y="446" width="10" height="18" fill="#eee" stroke="#aaa"/><rect x="186" y="449" width="4" height="4" fill="#e89a3a"/><path d="M193 444H199V455H203L196 463L189 455H193Z" fill="#4e7cb0"/>
<rect x="216" y="446" width="10" height="18" fill="#eee" stroke="#aaa"/><rect x="218" y="449" width="4" height="4" fill="#e89a3a"/><path d="M225 463H231V452H235L228 444L221 452H225Z" fill="#4e7cb0"/>
<rect x="246" y="445" width="14" height="14" fill="#f5f5f5" stroke="#777"/><rect x="256" y="456" width="8" height="6" rx="1" fill="#d94141"/><path d="M258 459H262" stroke="#fff"/>

<rect x="2.500" y="473.500" width="384" height="390" fill="#fff" stroke="#a6a6a6"/>
<rect x="3" y="475" width="383" height="22" fill="#e9e9e9"/>
<use href="#chk" x="40" y="485"/><use href="#tick" x="40" y="485"/>
<rect x="56" y="475" width="20" height="20" fill="#8a5528" stroke="#5e3a1c"/><path d="M59 493L62 483L70 477L73 480L65 490Z" fill="#f0d448"/>
<text x="84" y="491" font-size="14" font-weight="bold" text-decoration="underline" textLength="50" lengthAdjust="spacingAndGlyphs">ベクタ化</text>
<use href="#chip" x="370" y="485"/>
<use href="#chk" x="40" y="508"/><use href="#tick" x="40" y="508"/><use href="#rast" x="66" y="508"/>
<text x="84" y="514" font-size="14" font-weight="bold" textLength="120" lengthAdjust="spacingAndGlyphs">問題域ラスタの出力</text>
<use href="#chip" x="370" y="508"/>
<use href="#tri" x="14" y="530"/><use href="#chk" x="40" y="530"/><use href="#rast" x="66" y="530"/>
<text x="84" y="537" font-size="14" font-style="italic" textLength="73" lengthAdjust="spacingAndGlyphs" style="fill:#808080">流向の出力</text>
<use href="#chip" x="370" y="530"/>
<use href="#tri" x="14" y="553"/><use href="#chk" x="40" y="553"/><use href="#rast" x="66" y="553"/>
<text x="84" y="559" font-size="14" font-style="italic" textLength="129" lengthAdjust="spacingAndGlyphs" style="fill:#808080">窪地なしDEMの出力</text>
<use href="#chip" x="370" y="552"/>
<use href="#chk" x="40" y="576"/><use href="#tick" x="40" y="576"/><path d="M56 576H76" stroke="#777" stroke-width="2"/>
<text x="84" y="582" font-size="14" textLength="76" lengthAdjust="spacingAndGlyphs">roads_6670</text>
<use href="#tri" x="14" y="598"/><use href="#chk" x="40" y="598"/><use href="#rast" x="66" y="598"/>
<text x="84" y="604" font-size="14" font-style="italic" textLength="45" lengthAdjust="spacingAndGlyphs" style="fill:#808080">merge</text>
<path d="M391 530V550" stroke="#aaa" stroke-dasharray="1 3"/>

<!-- MAP -->
<rect x="396" y="212" width="1456" height="652" fill="#ff0"/>
<svg x="396" y="212" width="1456" height="652" viewBox="396 212 1456 652" overflow="hidden">
<g transform="translate(396 213)">
<use href="#s" x="124" y="5"/><use href="#l" x="172" y="13"/><use href="#t" x="422" y="13"/><use href="#l" x="461" y="9"/><use href="#l" x="478" y="17"/><use href="#h" x="19" y="59"/><use href="#t" x="257" y="52"/><use href="#l" x="275" y="42"/><use href="#l" x="300" y="44"/><use href="#t" x="338" y="43"/><use href="#v" x="347" y="40"/><use href="#b" x="378" y="58"/><use href="#l" x="458" y="41"/><use href="#n" x="470" y="62"/><use href="#L" x="315" y="76"/><use href="#v" x="230" y="76"/><use href="#v" x="409" y="76"/><use href="#h" x="247" y="90"/><use href="#z" x="378" y="101"/><use href="#l" x="82" y="76"/><use href="#w" x="101" y="86"/><use href="#h" x="154" y="72"/><use href="#h" x="158" y="75"/><use href="#t" x="53" y="90"/><use href="#z" x="60" y="100"/><use href="#v" x="71" y="98"/><use href="#t" x="132" y="102"/><use href="#z" x="182" y="112"/><use href="#l" x="22" y="118"/><use href="#v" x="112" y="117"/><use href="#n" x="67" y="119"/><use href="#n" x="61" y="125"/><use href="#h" x="262" y="115"/><use href="#w" x="414" y="131"/><use href="#w" x="462" y="137"/><use href="#v" x="271" y="129"/><use href="#h" x="282" y="132"/><use href="#v" x="321" y="136"/><use href="#z" x="260" y="148"/><use href="#h" x="81" y="147"/><use href="#v" x="112" y="141"/><use href="#v" x="127" y="142"/><use href="#l" x="212" y="162"/><use href="#v" x="20" y="161"/><use href="#z" x="133" y="167"/><use href="#h" x="351" y="162"/><use href="#n" x="310" y="167"/><use href="#h" x="404" y="169"/><use href="#l" x="30" y="178"/><use href="#h" x="22" y="181"/><use href="#l" x="45" y="190"/><use href="#l" x="66" y="186"/><use href="#t" x="162" y="181"/><use href="#b" x="265" y="181"/><use href="#h" x="291" y="187"/><use href="#h" x="313" y="181"/><use href="#h" x="473" y="187"/><use href="#n" x="258" y="198"/><use href="#z" x="407" y="201"/><use href="#z" x="41" y="211"/><use href="#z" x="147" y="211"/><use href="#n" x="237" y="218"/><use href="#h" x="83" y="228"/><use href="#h" x="93" y="225"/><use href="#l" x="185" y="228"/><use href="#n" x="38" y="240"/><use href="#z" x="3" y="246"/><use href="#v" x="95" y="252"/><use href="#v" x="139" y="246"/><use href="#v" x="180" y="257"/><use href="#h" x="75" y="300"/><use href="#s" x="3" y="308"/><use href="#n" x="53" y="309"/><use href="#v" x="202" y="319"/>
</g>
<g transform="translate(880 213)">
<use href="#h" x="81" y="-2"/><use href="#h" x="188" y="-2"/><use href="#s" x="209" y="7"/><use href="#h" x="232" y="12"/><use href="#h" x="0" y="16"/><use href="#v" x="32" y="45"/><use href="#v" x="34" y="51"/><use href="#l" x="233" y="46"/><use href="#l" x="259" y="55"/><use href="#n" x="308" y="65"/><use href="#h" x="356" y="50"/><use href="#n" x="22" y="86"/><use href="#v" x="176" y="86"/><use href="#l" x="162" y="96"/><use href="#h" x="206" y="100"/><use href="#h" x="217" y="109"/><use href="#l" x="461" y="84"/><use href="#z" x="66" y="117"/><use href="#h" x="271" y="125"/><use href="#s" x="158" y="133"/><use href="#l" x="323" y="128"/><use href="#b" x="349" y="127"/><use href="#n" x="288" y="140"/><use href="#h" x="223" y="141"/><use href="#v" x="260" y="147"/><use href="#v" x="417" y="145"/><use href="#w" x="19" y="150"/><use href="#w" x="50" y="162"/><use href="#l" x="97" y="159"/><use href="#W" x="154" y="162"/><use href="#w" x="332" y="157"/><use href="#h" x="362" y="162"/><use href="#h" x="208" y="172"/><use href="#n" x="255" y="166"/><use href="#z" x="487" y="173"/><use href="#l" x="300" y="178"/><use href="#l" x="249" y="186"/><use href="#v" x="169" y="195"/><use href="#l" x="205" y="198"/><use href="#l" x="198" y="209"/><use href="#l" x="287" y="198"/><use href="#n" x="308" y="195"/><use href="#h" x="328" y="190"/><use href="#n" x="372" y="186"/><use href="#l" x="411" y="195"/><use href="#s" x="437" y="189"/><use href="#h" x="403" y="206"/><use href="#t" x="243" y="203"/><use href="#h" x="478" y="212"/><use href="#l" x="326" y="212"/><use href="#l" x="348" y="220"/><use href="#v" x="97" y="220"/><use href="#w" x="171" y="225"/><use href="#h" x="158" y="238"/><use href="#s" x="392" y="233"/><use href="#v" x="361" y="239"/><use href="#z" x="465" y="236"/><use href="#z" x="190" y="247"/><use href="#w" x="248" y="243"/><use href="#n" x="274" y="250"/><use href="#h" x="325" y="247"/><use href="#l" x="436" y="247"/><use href="#v" x="448" y="252"/><use href="#h" x="472" y="247"/><use href="#w" x="242" y="265"/><use href="#h" x="253" y="269"/><use href="#v" x="110" y="267"/><use href="#n" x="335" y="266"/><use href="#w" x="273" y="276"/><use href="#l" x="370" y="278"/><use href="#v" x="439" y="277"/><use href="#h" x="21" y="278"/><use href="#h" x="174" y="284"/><use href="#b" x="65" y="294"/><use href="#z" x="207" y="295"/><use href="#v" x="238" y="296"/><use href="#w" x="320" y="288"/><use href="#h" x="450" y="297"/><use href="#l" x="375" y="302"/><use href="#z" x="308" y="311"/><use href="#v" x="242" y="317"/><use href="#w" x="423" y="316"/><use href="#w" x="460" y="324"/>
</g>
<g transform="translate(1365 213)">
<use href="#h" x="209" y="6"/><use href="#h" x="197" y="15"/><use href="#v" x="283" y="39"/><use href="#n" x="102" y="52"/><use href="#t" x="173" y="78"/><use href="#h" x="106" y="94"/><use href="#w" x="275" y="98"/><use href="#l" x="283" y="100"/><use href="#n" x="413" y="106"/><use href="#h" x="353" y="128"/><use href="#W" x="92" y="140"/><use href="#l" x="49" y="155"/><use href="#v" x="201" y="148"/><use href="#l" x="378" y="154"/><use href="#z" x="288" y="166"/><use href="#h" x="100" y="178"/><use href="#v" x="139" y="173"/><use href="#v" x="220" y="177"/><use href="#z" x="231" y="180"/><use href="#z" x="478" y="181"/><use href="#z" x="192" y="198"/><use href="#n" x="28" y="203"/><use href="#l" x="126" y="203"/><use href="#h" x="197" y="221"/><use href="#b" x="120" y="234"/><use href="#l" x="15" y="252"/><use href="#t" x="237" y="242"/><use href="#n" x="293" y="233"/><use href="#n" x="450" y="227"/><use href="#h" x="225" y="263"/><use href="#z" x="388" y="255"/><use href="#v" x="342" y="262"/><use href="#h" x="426" y="269"/><use href="#l" x="87" y="280"/><use href="#z" x="120" y="273"/><use href="#l" x="450" y="278"/><use href="#l" x="182" y="289"/><use href="#w" x="220" y="293"/><use href="#l" x="213" y="291"/><use href="#l" x="228" y="291"/><use href="#n" x="255" y="283"/><use href="#z" x="335" y="289"/><use href="#t" x="123" y="296"/><use href="#z" x="125" y="302"/><use href="#l" x="322" y="302"/><use href="#s" x="382" y="305"/><use href="#l" x="372" y="312"/><use href="#l" x="56" y="313"/><use href="#n" x="278" y="311"/><use href="#z" x="155" y="317"/><use href="#z" x="160" y="321"/><use href="#s" x="183" y="321"/><use href="#h" x="200" y="323"/><use href="#n" x="317" y="321"/><use href="#l" x="450" y="321"/><use href="#h" x="477" y="327"/>
</g>
<g transform="translate(396 539)">
<use href="#l" x="43" y="3"/><use href="#n" x="65" y="12"/><use href="#v" x="105" y="4"/><use href="#z" x="165" y="4"/><use href="#l" x="117" y="39"/><use href="#h" x="123" y="43"/><use href="#z" x="13" y="49"/><use href="#h" x="9" y="62"/><use href="#h" x="115" y="65"/><use href="#v" x="169" y="65"/><use href="#s" x="179" y="68"/><use href="#S" x="285" y="69"/><use href="#h" x="382" y="78"/><use href="#l" x="44" y="78"/><use href="#z" x="58" y="88"/><use href="#n" x="16" y="97"/><use href="#v" x="7" y="135"/><use href="#v" x="192" y="147"/><use href="#z" x="372" y="157"/><use href="#v" x="443" y="145"/><use href="#v" x="170" y="177"/><use href="#v" x="173" y="182"/><use href="#v" x="459" y="232"/><use href="#l" x="350" y="312"/><use href="#h" x="358" y="315"/><use href="#h" x="446" y="326"/><use href="#t" x="499" y="303"/><use href="#n" x="514" y="295"/><use href="#v" x="519" y="288"/><use href="#v" x="540" y="279"/><use href="#z" x="545" y="298"/><use href="#v" x="631" y="29"/><use href="#v" x="681" y="29"/><use href="#t" x="709" y="38"/><use href="#h" x="667" y="56"/><use href="#t" x="694" y="75"/><use href="#v" x="718" y="88"/><use href="#v" x="685" y="102"/><use href="#w" x="669" y="122"/><use href="#l" x="680" y="196"/><use href="#t" x="660" y="218"/><use href="#t" x="675" y="218"/><use href="#l" x="701" y="255"/><use href="#n" x="712" y="252"/><use href="#h" x="726" y="263"/><use href="#l" x="724" y="293"/><use href="#l" x="724" y="320"/>
</g>
<g transform="translate(1123 539)">
<use href="#v" x="48" y="10"/><use href="#w" x="168" y="12"/><use href="#t" x="174" y="20"/><use href="#t" x="97" y="37"/><use href="#b" x="120" y="37"/><use href="#n" x="151" y="48"/><use href="#t" x="151" y="44"/><use href="#z" x="200" y="31"/><use href="#t" x="215" y="52"/><use href="#v" x="267" y="53"/><use href="#z" x="294" y="26"/><use href="#h" x="219" y="2"/><use href="#z" x="400" y="33"/><use href="#v" x="418" y="26"/><use href="#l" x="438" y="34"/><use href="#n" x="418" y="12"/><use href="#n" x="430" y="4"/><use href="#h" x="489" y="43"/><use href="#z" x="504" y="35"/><use href="#z" x="535" y="23"/><use href="#t" x="591" y="22"/><use href="#z" x="405" y="63"/><use href="#v" x="371" y="79"/><use href="#h" x="457" y="83"/><use href="#h" x="191" y="89"/><use href="#h" x="200" y="134"/><use href="#z" x="449" y="113"/><use href="#z" x="515" y="110"/><use href="#l" x="528" y="90"/><use href="#b" x="552" y="99"/><use href="#w" x="540" y="78"/><use href="#z" x="548" y="77"/><use href="#w" x="575" y="75"/><use href="#h" x="582" y="78"/><use href="#h" x="617" y="78"/><use href="#v" x="619" y="88"/><use href="#z" x="636" y="72"/><use href="#h" x="650" y="75"/><use href="#v" x="657" y="67"/><use href="#l" x="689" y="70"/><use href="#v" x="697" y="17"/><use href="#t" x="711" y="18"/><use href="#v" x="671" y="45"/><use href="#h" x="708" y="43"/><use href="#n" x="711" y="55"/><use href="#n" x="716" y="112"/><use href="#v" x="603" y="123"/><use href="#h" x="502" y="131"/><use href="#b" x="560" y="127"/><use href="#l" x="582" y="138"/><use href="#t" x="660" y="140"/><use href="#v" x="616" y="151"/><use href="#l" x="558" y="158"/><use href="#z" x="650" y="202"/><use href="#z" x="655" y="208"/><use href="#z" x="661" y="215"/><use href="#z" x="713" y="201"/><use href="#z" x="696" y="235"/><use href="#b" x="404" y="241"/><use href="#h" x="410" y="247"/><use href="#h" x="225" y="259"/><use href="#w" x="500" y="265"/><use href="#t" x="381" y="272"/><use href="#v" x="683" y="273"/><use href="#v" x="477" y="295"/><use href="#h" x="545" y="303"/><use href="#b" x="490" y="313"/><use href="#t" x="484" y="318"/><use href="#h" x="507" y="316"/><use href="#l" x="21" y="305"/><use href="#v" x="35" y="298"/><use href="#h" x="16" y="310"/>
</g>
</svg>
<rect x="1852" y="212" width="1" height="652" fill="#aaa"/>
<ellipse cx="784.500" cy="527" rx="65" ry="39" fill="none" stroke="#ee2128" stroke-width="3.500"/>

<!-- red frames -->
<rect x="12.500" y="462.500" width="283" height="47" fill="none" stroke="#ee1c25" stroke-width="3"/>
<rect x="357.500" y="115.500" width="60" height="44" fill="none" stroke="#ee1c25" stroke-width="3"/>
<rect x="960.500" y="67.500" width="60" height="44" fill="none" stroke="#ee1c25" stroke-width="3"/>

<!-- badges -->
<g font-size="22" font-weight="bold" text-anchor="middle">
<use href="#bd" x="50" y="438"/><text x="50" y="446" style="fill:#fff">1</text>
<use href="#bd" x="334" y="114"/><text x="334" y="122" style="fill:#fff">2</text>
<use href="#bd" x="930" y="86"/><text x="930" y="94" style="fill:#fff">3</text>
<use href="#bd" x="705" y="492"/><text x="705" y="500" style="fill:#fff">4</text>
</g>

<!-- status bar -->
<rect y="864" width="1853" height="38" fill="#f0f0f0"/>
<rect y="863.500" width="1853" height="1" fill="#b0b0b0"/>
<rect y="901" width="1853" height="1" fill="#b0b0b0"/>
<rect x="7" y="870" width="249" height="26" rx="3" fill="#fff" stroke="#b5b5b5" stroke-width="1.500"/>
<circle cx="24" cy="881" r="5" fill="none" stroke="#888" stroke-width="1.500"/><path d="M28 885L32 890" stroke="#888" stroke-width="1.800"/>
<text x="43" y="888" font-size="13" textLength="90" lengthAdjust="spacingAndGlyphs" style="fill:#888">検索(Ctrl + K)</text>
<g font-size="12.500">
<text x="960" y="888" textLength="28" lengthAdjust="spacingAndGlyphs">座標</text>
<rect x="992.500" y="870.500" width="102" height="26" rx="2" fill="#fff" stroke="#c4c4c4"/>
<text x="1000" y="888" textLength="83" lengthAdjust="spacingAndGlyphs" style="fill:#333">89884, −40286</text>
<text x="1137" y="888" textLength="25" lengthAdjust="spacingAndGlyphs">縮尺</text>
<rect x="1167.500" y="870.500" width="99" height="26" rx="2" fill="#fff" stroke="#c4c4c4"/><rect x="1241" y="871" width="25" height="25" fill="#f0f0f0"/>
<text x="1171" y="888" textLength="37" lengthAdjust="spacingAndGlyphs" style="fill:#333">1:8258</text>
<use href="#dr" x="1253" y="883"/>
<text x="1308" y="888" textLength="27" lengthAdjust="spacingAndGlyphs">拡大</text>
<rect x="1341.500" y="870.500" width="103" height="26" rx="2" fill="#fff" stroke="#c4c4c4"/><rect x="1426" y="871" width="18" height="25" fill="#f0f0f0"/>
<text x="1345" y="888" textLength="29" lengthAdjust="spacingAndGlyphs" style="fill:#333">100%</text>
<use href="#spin" x="1434" y="883"/>
<text x="1454" y="888" textLength="28" lengthAdjust="spacingAndGlyphs">回転</text>
<rect x="1494.500" y="870.500" width="103" height="26" rx="2" fill="#fff" stroke="#c4c4c4"/><rect x="1580" y="871" width="17" height="25" fill="#f0f0f0"/>
<text x="1499" y="888" textLength="25" lengthAdjust="spacingAndGlyphs" style="fill:#333">0.0 °</text>
<use href="#spin" x="1588" y="883"/>
<text x="1627" y="888" textLength="32" lengthAdjust="spacingAndGlyphs">レンダ</text>
<text x="1703" y="888" textLength="62" lengthAdjust="spacingAndGlyphs">EPSG:6670</text>
</g>
<g transform="translate(1109 883)"><path d="M-4-9C-8-6-6-2-2 0L2 8" fill="none" stroke="#222" stroke-width="3"/><circle cx="2" cy="6" r="4" fill="none" stroke="#222" stroke-width="2"/><path d="M-3-10L5 8" stroke="#222" stroke-width="2"/><path d="M7-9L3-4" stroke="#888"/></g>
<path d="M1284 880V875A5 5 0 0 1 1294 875V880" fill="none" stroke="#777" stroke-width="2"/><rect x="1281" y="879" width="16" height="14" rx="1.500" fill="#777"/>
<use href="#chk" x="1614" y="883"/><use href="#tick" x="1614" y="883"/>
<g transform="translate(1687 883)"><circle r="8" fill="#aaa" stroke="#666"/><path d="M-8 0H8M0-8V8M-6-5Q0-2 6-5M-6 5Q0 2 6 5" stroke="#fff" fill="none"/></g>
<path d="M1799 873H1813Q1816 873 1816 876V887Q1816 890 1813 890H1809L1807 894L1805 890H1799Q1796 890 1796 887V876Q1796 873 1799 873Z" fill="#666"/><path d="M1801 881.500H1811" stroke="#fff" stroke-width="2" stroke-dasharray="2 2"/>
<path d="M1849 889L1840 898M1849 893L1844 898" stroke="#bbb" stroke-dasharray="1 2"/>
<rect x="0" y="0" width="1" height="902" fill="#b0b0b0"/><rect x="1" y="212" width="1" height="690" fill="#c0c0c0"/>
<rect x="1852" y="0" width="1" height="212" fill="#b5b5b5"/>
</svg>
</body></html>
